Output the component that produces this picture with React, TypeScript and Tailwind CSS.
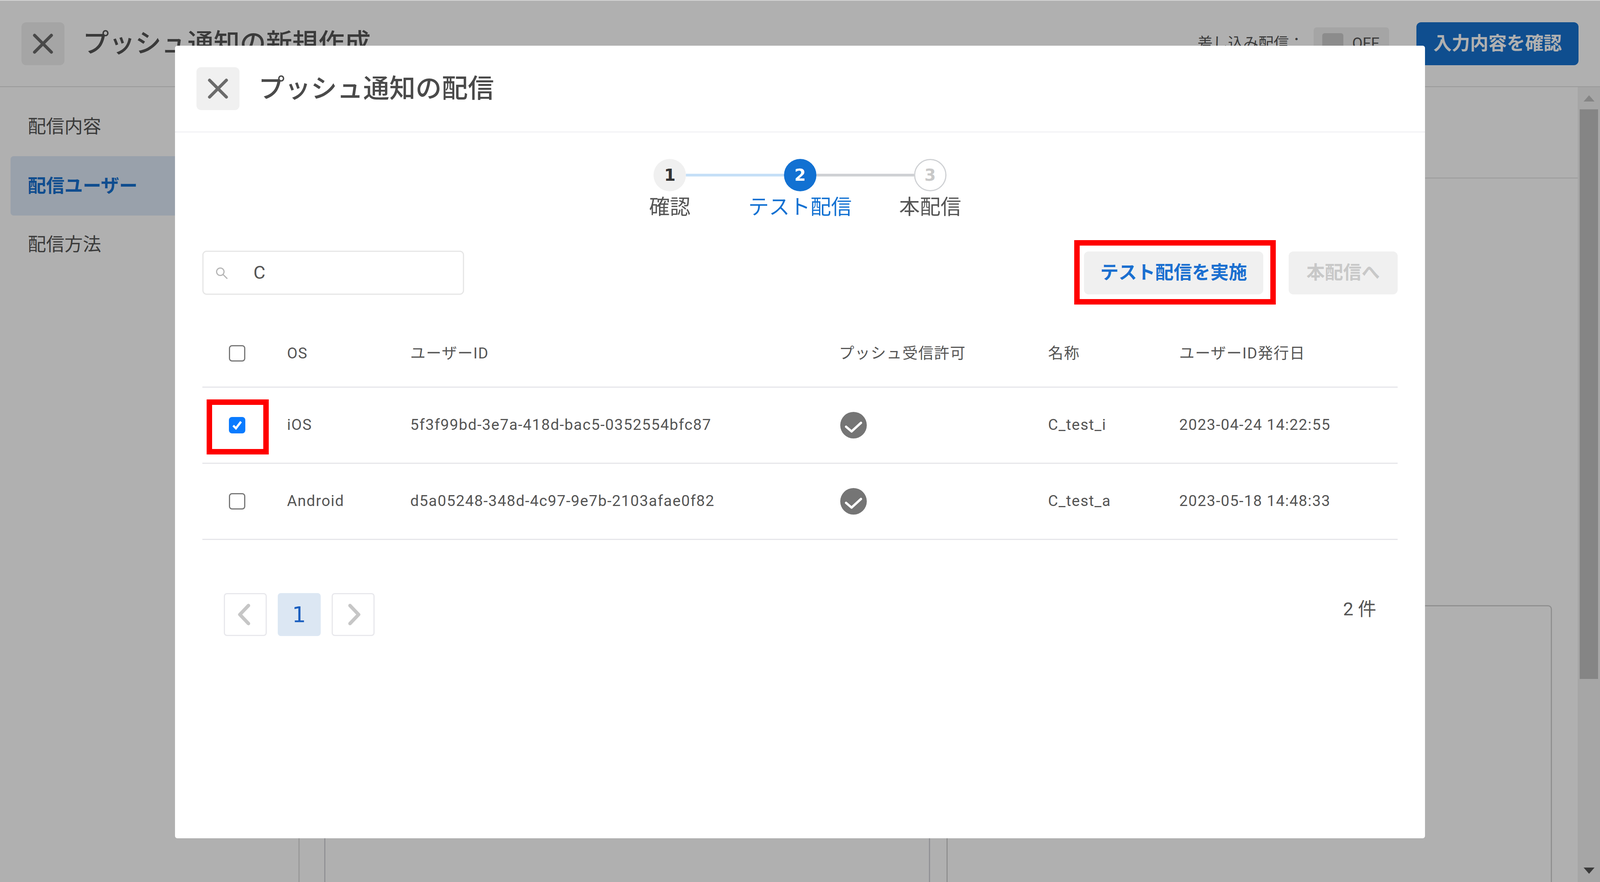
const font = "font-['Roboto','Noto_Sans_CJK_JP','Noto_Sans',sans-serif]";

function CloseIcon() {
    return <svg width="52" height="52" viewBox="0 0 52 52" fill="none" stroke="#6b6b6b" strokeWidth="8" strokeLinecap="round">
        <path d="M4.5 4.5 L47.5 47.5 M47.5 4.5 L4.5 47.5"/>
    </svg>;
}

function CloseButton() {
    return <button className="flex items-center justify-center w-[110px] h-[110px] shrink-0 rounded-[12px] bg-[#f0f0f0]">
        <CloseIcon/>
    </button>;
}

function Step({num, label, state, left, right}: {
    num: string,
    label: string,
    state: "done" | "active" | "todo",
    left: string,
    right: string
}) {
    const circle = state === "done"
        ? "bg-[#f0f0f0] text-[#333333]"
        : state === "active"
            ? "bg-[#1271d2] text-white"
            : "bg-white border-[3px] border-[#cfd1d4] text-[#c8c8c8]";
    return <div className="flex flex-col items-center w-[10.41%]">
        <div className="flex items-center w-full">
            <div className={`flex-1 h-[7px] ${left}`}/>
            <div className={`flex items-center justify-center w-[83px] h-[83px] shrink-0 rounded-full text-[42px] font-bold font-['DejaVu_Sans',sans-serif] ${circle}`}>
                {num}
            </div>
            <div className={`flex-1 h-[7px] ${right}`}/>
        </div>
        <div className={`text-[53px] leading-[82px] whitespace-nowrap ${state === "active" ? "text-[#1271d2]" : "text-[#555555]"}`}>
            {label}
        </div>
    </div>;
}

function Checkbox({checked}: { checked?: boolean }) {
    if (checked) {
        return <div className="flex items-center justify-center w-[42px] h-[42px] rounded-[8px] bg-[#0a7bff]">
            <svg width="30" height="30" viewBox="0 0 30 30" fill="none" stroke="white" strokeWidth="5.5">
                <path d="M5 16 L12 23 L25 6"/>
            </svg>
        </div>;
    }
    return <div className="w-[42px] h-[42px] rounded-[8px] border-[3px] border-[#767676] bg-white"/>;
}

function CheckCircle() {
    return <svg width="68" height="68" viewBox="0 0 68 68" className="block">
        <circle cx="34" cy="34" r="34" fill="#757575"/>
        <path d="M15 38 L29 50 L53 28" fill="none" stroke="white" strokeWidth="6" strokeLinecap="round"
              strokeLinejoin="round"/>
    </svg>;
}

function HighlightBox({className}: { className: string }) {
    return <div className={`absolute border-[14px] border-[#ff0000] pointer-events-none ${className}`}/>;
}

const rows = [
    {os: "iOS", id: "5f3f99bd-3e7a-418d-bac5-0352554bfc87", name: "C_test_i", date: "2023-04-24 14:22:55", checked: true},
    {os: "Android", id: "d5a05248-348d-4c97-9e7b-2103afae0f82", name: "C_test_a", date: "2023-05-18 14:48:33", checked: false},
];

function Modal() {
    return <div className="absolute left-[10.93%] right-[10.93%] top-[117px] h-[2030px] bg-white rounded-[6px] text-[#555555]">
        <div className="flex items-center h-[222px] pl-[55px] border-b-2 border-[#ececf0]">
            <CloseButton/>
            <h2 className="ml-[49px] text-[67px] font-medium text-[#4a4a4a]">プッシュ通知の配信</h2>
        </div>

        <div className="flex justify-center pt-[68px]">
            <Step num="1" label="確認" state="done" left="" right="bg-[#c5dff7]"/>
            <Step num="2" label="テスト配信" state="active" left="bg-[#c5dff7]" right="bg-[#cfd1d4]"/>
            <Step num="3" label="本配信" state="todo" left="bg-[#cfd1d4]" right=""/>
        </div>

        <div className="mx-[70px]">
            <div className="flex items-center mt-[70px]">
                <div className="flex items-center w-[21.9%] h-[113px] pl-[30px] rounded-[11px] border-[3px] border-[#e6e6e6] bg-white">
                    <svg width="32" height="32" viewBox="0 0 32 32" fill="none" stroke="#b5b5b5" strokeWidth="3"
                         strokeLinecap="round" className="shrink-0">
                        <circle cx="13" cy="13" r="9.5"/>
                        <path d="M20 20 L30 30"/>
                    </svg>
                    <span className="ml-[66px] text-[47px] text-[#555555]">C</span>
                </div>
                <div className="relative ml-auto w-[15%]">
                    <button className="w-full h-[110px] rounded-[12px] bg-[#f0f0f0] text-[47px] font-bold text-[#1a6fd0]">
                        テスト配信を実施
                    </button>
                    <HighlightBox className="-left-[25px] -right-[32px] -top-[29px] -bottom-[26px]"/>
                </div>
                <button className="ml-[2.12%] w-[9.13%] h-[110px] rounded-[12px] bg-[#f0f0f0] text-[47px] font-bold text-[#c8c8c8]">
                    本配信へ
                </button>
            </div>

            <table className="w-full table-fixed mt-[65px] text-[39px] tracking-[1.6px] text-left">
                <colgroup>
                    <col className="w-[7.09%]"/>
                    <col className="w-[10.31%]"/>
                    <col className="w-[35.86%]"/>
                    <col className="w-[17.49%]"/>
                    <col className="w-[10.97%]"/>
                    <col className="w-[18.28%]"/>
                </colgroup>
                <thead>
                <tr className="h-[171px] border-b-[3px] border-[#e6e6ea]">
                    <th className="pl-[68px] font-normal"><Checkbox/></th>
                    <th className="font-normal">OS</th>
                    <th className="font-normal">ユーザーID</th>
                    <th className="font-normal">プッシュ受信許可</th>
                    <th className="font-normal">名称</th>
                    <th className="font-normal">ユーザーID発行日</th>
                </tr>
                </thead>
                <tbody>
                {rows.map(r => <tr key={r.id} className="h-[195px] border-b-[3px] border-[#e6e6ea]">
                    <td className="pl-[68px]">
                        <div className="relative w-[42px]">
                            <Checkbox checked={r.checked}/>
                            {r.checked && <HighlightBox className="-left-[57px] -right-[60px] -top-[45px] -bottom-[54px]"/>}
                        </div>
                    </td>
                    <td>{r.os}</td>
                    <td>{r.id}</td>
                    <td className="pl-[3px]"><CheckCircle/></td>
                    <td>{r.name}</td>
                    <td>{r.date}</td>
                </tr>)}
                </tbody>
            </table>

            <div className="flex items-start justify-between mt-[136px] px-[55px]">
                <div className="flex gap-[28px]">
                    <div className="flex items-center justify-center w-[110px] h-[110px] rounded-[8px] border-[3px] border-[#e8e8ec] pr-[6px]">
                        <svg width="34" height="58" viewBox="0 0 34 58" fill="none" stroke="#c6c6c6" strokeWidth="9"
                             strokeLinecap="round" strokeLinejoin="round">
                            <path d="M28 6 L6 29 L28 52"/>
                        </svg>
                    </div>
                    <div className="flex items-center justify-center w-[110px] h-[110px] rounded-[8px] bg-[#dce7f3] text-[56px] font-['DejaVu_Sans',sans-serif] text-[#1b5fbf]">
                        1
                    </div>
                    <div className="flex items-center justify-center w-[110px] h-[110px] rounded-[8px] border-[3px] border-[#e8e8ec] pl-[6px]">
                        <svg width="34" height="58" viewBox="0 0 34 58" fill="none" stroke="#c6c6c6" strokeWidth="9"
                             strokeLinecap="round" strokeLinejoin="round">
                            <path d="M6 6 L28 29 L6 52"/>
                        </svg>
                    </div>
                </div>
                <div className="mt-[7px] text-[47px] leading-[68px]">2 件</div>
            </div>
        </div>
    </div>;
}

export default function App() {
    return <div className={`relative w-full h-[2259px] overflow-hidden bg-white text-[#555555] ${font}`}>
        <div className="h-[2px] bg-[#d4d4d4]"/>
        <header className="flex items-center h-[221px] px-[55px] border-b-2 border-[#dedede]">
            <CloseButton/>
            <h1 className="flex-1 ml-[47px] text-[67px] font-medium">プッシュ通知の新規作成</h1>
            <span className="text-[39px]">差し込み配信：</span>
            <div className="flex items-center ml-[25px] w-[193px] h-[84px] pl-[22px] rounded-[8px] bg-[#f0f0f0]">
                <div className="w-[54px] h-[54px] rounded-[6px] bg-[#cbcbcb]"/>
                <span className="ml-[22px] text-[39px]">OFF</span>
            </div>
            <button className="ml-[70px] w-[10.4%] h-[110px] rounded-[12px] bg-[#1672cf] text-[47px] font-bold text-white">
                入力内容を確認
            </button>
        </header>

        <div className="flex h-[2036px]">
            <aside className="w-[18.73%] shrink-0 pt-[25px] pl-[27px] border-r-[3px] border-[#dedede] text-[47px]">
                <div className="flex items-center h-[152px] pl-[44px]">配信内容</div>
                <div className="flex items-center h-[152px] pl-[44px] rounded-l-[8px] bg-[#dee9f8] font-bold text-[#1670cf]">配信ユーザー</div>
                <div className="flex items-center h-[148px] pl-[44px]">配信方法</div>
            </aside>

            <main className="flex-1 min-w-0 overflow-hidden">
                <div className="h-[234px] border-b-2 border-[#dedede]"/>
                <div className="flex gap-[1.34%] pl-[1.93%] pr-[2.02%]">
                    <div className="flex-1 h-[2000px] border-[3px] rounded-t-[10px] border-[#d2d2d8]"/>
                    <div className="flex-1 h-[2000px] mt-[1093px] border-[3px] rounded-t-[10px] border-[#cfcfcf]"/>
                </div>
            </main>

            <div className="flex flex-col items-center w-[57px] shrink-0 bg-[#f1f1f1]">
                <div className="flex items-center justify-center h-[57px] w-full">
                    <svg width="28" height="16" viewBox="0 0 28 16" fill="#c1c1c1"><path d="M14 0 L28 16 L0 16 Z"/></svg>
                </div>
                <div className="w-[47px] h-[1459px] bg-[#c1c1c1]"/>
                <div className="flex-1"/>
                <div className="flex items-center justify-center h-[59px] w-full">
                    <svg width="28" height="16" viewBox="0 0 28 16" fill="#555555"><path d="M0 0 L28 0 L14 16 Z"/></svg>
                </div>
            </div>
        </div>

        <div className="absolute inset-x-0 bottom-0 top-[2px] bg-[rgba(0,0,0,0.31)]"/>
        <Modal/>
    </div>;
}
